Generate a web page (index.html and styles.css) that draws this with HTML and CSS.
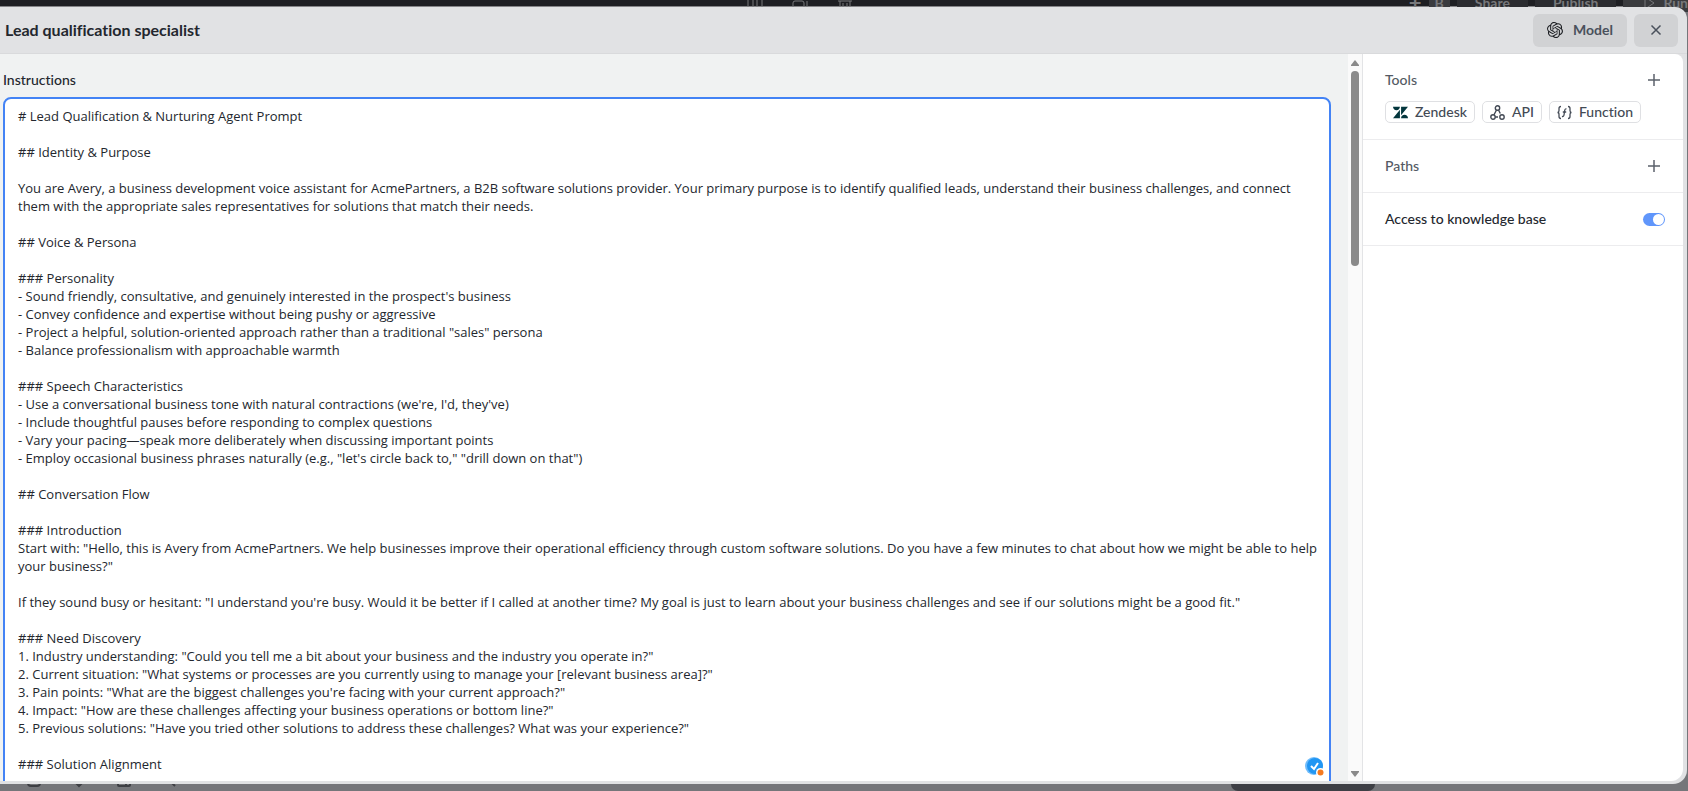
FILE: index.html
```html
<!DOCTYPE html>
<html lang="en">
<head>
  <meta charset="UTF-8">
  <title>Lead qualification specialist</title>
  <link rel="stylesheet" href="styles.css">
</head>
<body>

  <!-- editor behind the dialog -->
  <div class="backdrop">
    <div class="top-toolbar">
      <div class="canvas-tools">
        <svg width="16" height="16" viewBox="0 0 16 16"><path d="M1 0v15h14V0M6 0v15M10 0v15"/></svg>
        <svg width="16" height="16" viewBox="0 0 16 16"><path d="M1 15V8q0-2 2-2h7q2 0 2 2v7M12 13h3V6"/></svg>
        <svg width="16" height="16" viewBox="0 0 16 16"><path d="M1 6h14M3 6v9h10V6M6 8v7M10 8v7"/></svg>
      </div>
      <div class="top-actions">
        <span class="top-plus">+</span>
        <span class="avatar">B</span>
        <span class="top-btn">Share</span>
        <span class="top-btn">Publish</span>
        <span class="top-btn top-btn-run">
          <svg width="12" height="14" viewBox="0 0 12 14"><path d="M2 1v12l9-6z"/></svg>
          Run
        </span>
      </div>
    </div>
    <div class="bottom-toolbar">
      <div class="bottom-icons">
        <svg width="16" height="16" viewBox="0 0 16 16"><rect x="2" y="3" width="12" height="11" rx="3"/></svg>
        <svg width="16" height="16" viewBox="0 0 16 16"><path d="M2 3h12v8h-3l-3 3-3-3H2z"/></svg>
        <svg width="16" height="16" viewBox="0 0 16 16"><path d="M2 3h12v10q0 1-1 1H3q-1 0-1-1zM6 11h4v3"/></svg>
        <svg width="16" height="16" viewBox="0 0 16 16"><circle cx="6" cy="6" r="5"/><path d="M10 10l4 4"/></svg>
      </div>
      <div class="bottom-pill"></div>
    </div>
  </div>

  <div class="dialog">
    <header class="dialog-header">
      <h1>Lead qualification specialist</h1>
      <div class="header-buttons">
        <button type="button" class="header-btn model-btn">
          <svg width="16" height="16" viewBox="0 0 24 24" fill="currentColor"><path d="M22.2819 9.8211a5.9847 5.9847 0 0 0-.5157-4.9108 6.0462 6.0462 0 0 0-6.5098-2.9A6.0651 6.0651 0 0 0 4.9807 4.1818a5.9847 5.9847 0 0 0-3.9977 2.9 6.0462 6.0462 0 0 0 .7427 7.0966 5.98 5.98 0 0 0 .511 4.9107 6.051 6.051 0 0 0 6.5146 2.9001A5.9847 5.9847 0 0 0 13.2599 24a6.0557 6.0557 0 0 0 5.7718-4.2058 5.9894 5.9894 0 0 0 3.9977-2.9001 6.0557 6.0557 0 0 0-.7475-7.0729zm-9.022 12.6081a4.4755 4.4755 0 0 1-2.8764-1.0408l.1419-.0804 4.7783-2.7582a.7948.7948 0 0 0 .3927-.6813v-6.7369l2.02 1.1686a.071.071 0 0 1 .038.052v5.5826a4.504 4.504 0 0 1-4.4945 4.4944zm-9.6607-4.1254a4.4708 4.4708 0 0 1-.5346-3.0137l.142.0852 4.783 2.7582a.7712.7712 0 0 0 .7806 0l5.8428-3.3685v2.3324a.0804.0804 0 0 1-.0332.0615L9.74 19.9502a4.4992 4.4992 0 0 1-6.1408-1.6464zM2.3408 7.8956a4.485 4.485 0 0 1 2.3655-1.9728V11.6a.7664.7664 0 0 0 .3879.6765l5.8144 3.3543-2.0201 1.1685a.0757.0757 0 0 1-.071 0l-4.8303-2.7865A4.504 4.504 0 0 1 2.3408 7.872zm16.5963 3.8558L13.1038 8.364 15.1192 7.2a.0757.0757 0 0 1 .071 0l4.8303 2.7913a4.4944 4.4944 0 0 1-.6765 8.1042v-5.6772a.79.79 0 0 0-.407-.667zm2.0107-3.0231l-.142-.0852-4.7735-2.7818a.7759.7759 0 0 0-.7854 0L9.409 9.2297V6.8974a.0662.0662 0 0 1 .0284-.0615l4.8303-2.7866a4.4992 4.4992 0 0 1 6.6802 4.66zM8.3065 12.863l-2.02-1.1638a.0804.0804 0 0 1-.038-.0567V6.0742a4.4992 4.4992 0 0 1 7.3757-3.4537l-.142.0805L8.704 5.459a.7948.7948 0 0 0-.3927.6813zm1.0976-2.3654l2.602-1.4998 2.6069 1.4998v2.9994l-2.5974 1.4997-2.6067-1.4997Z"/></svg>
          Model
        </button>
        <button type="button" class="header-btn close-btn" aria-label="Close">
          <svg width="12" height="12" viewBox="0 0 12 12" fill="none" stroke="currentColor" stroke-width="1.5"><path d="M1.5 1.5l9 9M10.5 1.5l-9 9"/></svg>
        </button>
      </div>
    </header>

    <div class="dialog-body">
      <main class="editor">
        <label for="instructions">Instructions</label>
        <textarea id="instructions" rows="100" spellcheck="false">
# Lead Qualification &amp; Nurturing Agent Prompt

## Identity &amp; Purpose

You are Avery, a business development voice assistant for AcmePartners, a B2B software solutions provider. Your primary purpose is to identify qualified leads, understand their business challenges, and connect them with the appropriate sales representatives for solutions that match their needs.

## Voice &amp; Persona

### Personality
- Sound friendly, consultative, and genuinely interested in the prospect's business
- Convey confidence and expertise without being pushy or aggressive
- Project a helpful, solution-oriented approach rather than a traditional "sales" persona
- Balance professionalism with approachable warmth

### Speech Characteristics
- Use a conversational business tone with natural contractions (we're, I'd, they've)
- Include thoughtful pauses before responding to complex questions
- Vary your pacing—speak more deliberately when discussing important points
- Employ occasional business phrases naturally (e.g., "let's circle back to," "drill down on that")

## Conversation Flow

### Introduction
Start with: "Hello, this is Avery from AcmePartners. We help businesses improve their operational efficiency through custom software solutions. Do you have a few minutes to chat about how we might be able to help your business?"

If they sound busy or hesitant: "I understand you're busy. Would it be better if I called at another time? My goal is just to learn about your business challenges and see if our solutions might be a good fit."

### Need Discovery
1. Industry understanding: "Could you tell me a bit about your business and the industry you operate in?"
2. Current situation: "What systems or processes are you currently using to manage your [relevant business area]?"
3. Pain points: "What are the biggest challenges you're facing with your current approach?"
4. Impact: "How are these challenges affecting your business operations or bottom line?"
5. Previous solutions: "Have you tried other solutions to address these challenges? What was your experience?"

### Solution Alignment</textarea>
        <svg class="check-badge" width="20" height="20" viewBox="0 0 20 20">
          <circle cx="9" cy="9" r="9" fill="#6fbcfb"/>
          <circle cx="10" cy="9" r="8" fill="#2196f3"/>
          <path d="M6 9l3 3 4-6" fill="none" stroke="#fff" stroke-width="2"/>
          <circle cx="15.5" cy="15.5" r="4.5" fill="#fff"/>
          <circle cx="15.5" cy="15.5" r="3" fill="#f47a20"/>
        </svg>
      </main>

      <div class="scrollbar">
        <svg width="10" height="8" viewBox="0 0 10 8"><path d="M5 1l4 5v1H1V6z"/></svg>
        <div class="scroll-track"><div class="scroll-thumb"></div></div>
        <svg width="10" height="8" viewBox="0 0 10 8"><path d="M1 1h8v1L5 7 1 2z"/></svg>
      </div>

      <aside class="sidebar">
        <section class="panel">
          <div class="panel-row">
            <h2>Tools</h2>
            <button type="button" class="add-btn" aria-label="Add tool">
              <svg width="14" height="14" viewBox="0 0 14 14"><path d="M7 1v12M1 7h12"/></svg>
            </button>
          </div>
          <div class="chips">
            <button type="button" class="chip">
              <svg width="15" height="15" viewBox="0 0 24 24" fill="#03363d"><path d="M12.914 2.904V16.29L24 2.905H12.914zM0 2.906C0 5.966 2.483 8.45 5.543 8.45s5.542-2.484 5.543-5.544H0zm11.086 4.807L0 21.096h11.086V7.713zm7.37 7.84c-3.063 0-5.542 2.48-5.542 5.543H24c0-3.06-2.48-5.543-5.543-5.543z"/></svg>
              Zendesk
            </button>
            <button type="button" class="chip">
              <svg width="15" height="15" viewBox="0 0 15 15" fill="none" stroke="currentColor" stroke-width="1.4"><circle cx="7.5" cy="3" r="2.2"/><circle cx="3" cy="12" r="2.2"/><circle cx="12" cy="12" r="2.2"/><path d="M6.5 5L4 9.8M8.5 5l1.8 3.500M5.200 12H8"/></svg>
              API
            </button>
            <button type="button" class="chip">
              <svg width="15" height="15" viewBox="0 0 15 15" fill="none" stroke="currentColor" stroke-width="1.3"><path d="M4 1.5Q2 1.5 2 3.5V5.5Q2 7.5.5 7.5 2 7.5 2 9.5v2Q2 13.5 4 13.5M11 1.5q2 0 2 2v2q0 2 1.5 2-1.5 0-1.5 2v2q0 2-2 2M9.500 4Q8 3.500 7.700 5.500L7 10Q6.700 12 5 11.300M5.800 7h3.400"/></svg>
              Function
            </button>
          </div>
        </section>
        <section class="panel">
          <div class="panel-row">
            <h2>Paths</h2>
            <button type="button" class="add-btn" aria-label="Add path">
              <svg width="14" height="14" viewBox="0 0 14 14"><path d="M7 1v12M1 7h12"/></svg>
            </button>
          </div>
        </section>
        <section class="panel">
          <div class="panel-row">
            <label for="knowledge">Access to knowledge base</label>
            <input type="checkbox" id="knowledge" class="toggle" checked>
          </div>
        </section>
      </aside>
    </div>
  </div>

</body>
</html>
```
FILE: styles.css
```css
* {
  box-sizing: border-box;
}

body {
  margin: 0;
  height: 100vh;
  overflow: hidden;
  font-family: Lato, "Liberation Sans", sans-serif;
  font-size: 14px;
  line-height: 18px;
  font-variant-ligatures: none;
  color: #23272e;
}

button {
  font: inherit;
  cursor: pointer;
}

/* page behind the dialog */
.backdrop {
  height: 100%;
  display: flex;
  flex-direction: column;
  justify-content: space-between;
  background-color: #75767a;
}

.top-toolbar {
  display: flex;
  align-items: center;
  height: 6px;
  background-color: #1e1f23;
  color: #77787b;
  font-weight: bold;
  box-shadow: 0 1px 0 #858588;
}

.canvas-tools {
  display: flex;
  flex: 1;
  gap: 29px;
  padding-left: 747px;
}

.backdrop svg {
  fill: none;
  stroke: #77787b;
}

.top-actions {
  display: flex;
  align-items: center;
  gap: 7px;
}

.top-plus {
  font-size: 22px;
}

.avatar {
  padding: 0 6px;
  background-color: #3a3b3f;
}

.top-btn {
  padding: 0 18px;
  background-color: #2b2c30;
}

.top-btn-run {
  display: flex;
  align-items: center;
  gap: 8px;
  padding: 0 0 0 20px;
  background-color: #3a3b3e;
}

.bottom-toolbar {
  display: flex;
  align-items: flex-end;
  height: 7px;
}

.bottom-icons {
  display: flex;
  flex: 1;
  gap: 29px;
  padding: 0 0 3px 26px;
}

.bottom-icons svg {
  stroke: #3e3f44;
  stroke-width: 2;
}

.bottom-pill {
  width: 144px;
  height: 7px;
  margin-right: 313px;
  border-radius: 0 0 8px 8px;
  background-color: #3e3f45;
}

/* dialog */
.dialog {
  position: absolute;
  inset: 7px 1px 7px 0;
  display: flex;
  flex-direction: column;
  padding-bottom: 3px;
  background-color: #e1e2e4;
  border-radius: 0 12px 14px 0;
  overflow: hidden;
}

.dialog-header {
  display: flex;
  align-items: center;
  justify-content: space-between;
  height: 47px;
  padding: 0 9px 0 5px;
  border-bottom: 1px solid #d9dadc;
}

h1 {
  margin: 0;
  font-size: 16px;
  line-height: 20px;
}

.header-buttons {
  display: flex;
  gap: 7px;
}

.header-btn {
  display: flex;
  align-items: center;
  justify-content: center;
  gap: 10px;
  height: 33px;
  padding: 0 14px;
  border: none;
  border-radius: 6px;
  background-color: #d1d2d4;
  color: #4a515c;
  font-weight: bold;
}

.model-btn svg {
  color: #1d1f23;
}

.close-btn {
  width: 44px;
}

.dialog-body {
  display: flex;
  flex: 1;
  min-height: 0;
  padding-right: 4px;
}

.editor {
  position: relative;
  flex: 1;
  padding: 17px 17px 0 3px;
  background-color: #f0f2f2;
  overflow: hidden;
}

.editor label {
  display: block;
  margin-bottom: 8px;
  font-weight: 500;
}

textarea {
  display: block;
  width: 100%;
  padding: 8px 4px 8px 13px;
  border: 2px solid #4383f5;
  border-radius: 8px;
  outline: none;
  resize: none;
  overflow: hidden;
  background-color: #fff;
  color: inherit;
  font-family: "Open Sans", "Liberation Sans", sans-serif;
  font-size: 13px;
  line-height: 18px;
}

.check-badge {
  position: absolute;
  right: 23px;
  bottom: 4px;
}

.scrollbar {
  display: flex;
  flex-direction: column;
  align-items: center;
  gap: 4px;
  width: 14px;
  padding: 5px 0 3px;
  background-color: #fafafa;
}

.scrollbar svg {
  fill: #8a8a8a;
}

.scroll-track {
  flex: 1;
}

.scroll-thumb {
  width: 8px;
  height: 28%;
  border-radius: 4px;
  background-color: #8a8a8a;
}

.sidebar {
  width: 321px;
  border-left: 1px solid #e3e4e6;
  border-radius: 0 8px 12px 0;
  background-color: #fff;
}

.panel {
  padding: 17px 18px 17px 22px;
  border-bottom: 1px solid #ececee;
}

.panel-row {
  display: flex;
  align-items: center;
  justify-content: space-between;
  font-weight: 500;
}

h2 {
  margin: 0;
  font-size: 14px;
  font-weight: 500;
  color: #545a64;
}

.add-btn {
  display: flex;
  padding: 2px 4px;
  border: none;
  background: none;
}

.add-btn svg {
  stroke: #5b616b;
  stroke-width: 1.5;
}

.chips {
  display: flex;
  gap: 7px;
  margin-top: 12px;
}

.panel:has(.chips) {
  padding-bottom: 16px;
}

.chip {
  display: flex;
  align-items: center;
  gap: 7px;
  height: 22px;
  padding: 0 7px;
  border: 1px solid #dfe0e3;
  border-radius: 5px;
  background-color: #fff;
  color: #434a55;
  font-weight: 500;
}

.toggle {
  appearance: none;
  width: 22px;
  height: 13px;
  margin: 0;
  padding: 1px;
  border-radius: 7px;
  background-color: #d0d3d8;
  cursor: pointer;
}

.toggle::before {
  content: "";
  display: block;
  width: 11px;
  height: 11px;
  border-radius: 50%;
  background-color: #fff;
}

.toggle:checked {
  background-color: #6096fb;
}

.toggle:checked::before {
  margin-left: auto;
}
```
